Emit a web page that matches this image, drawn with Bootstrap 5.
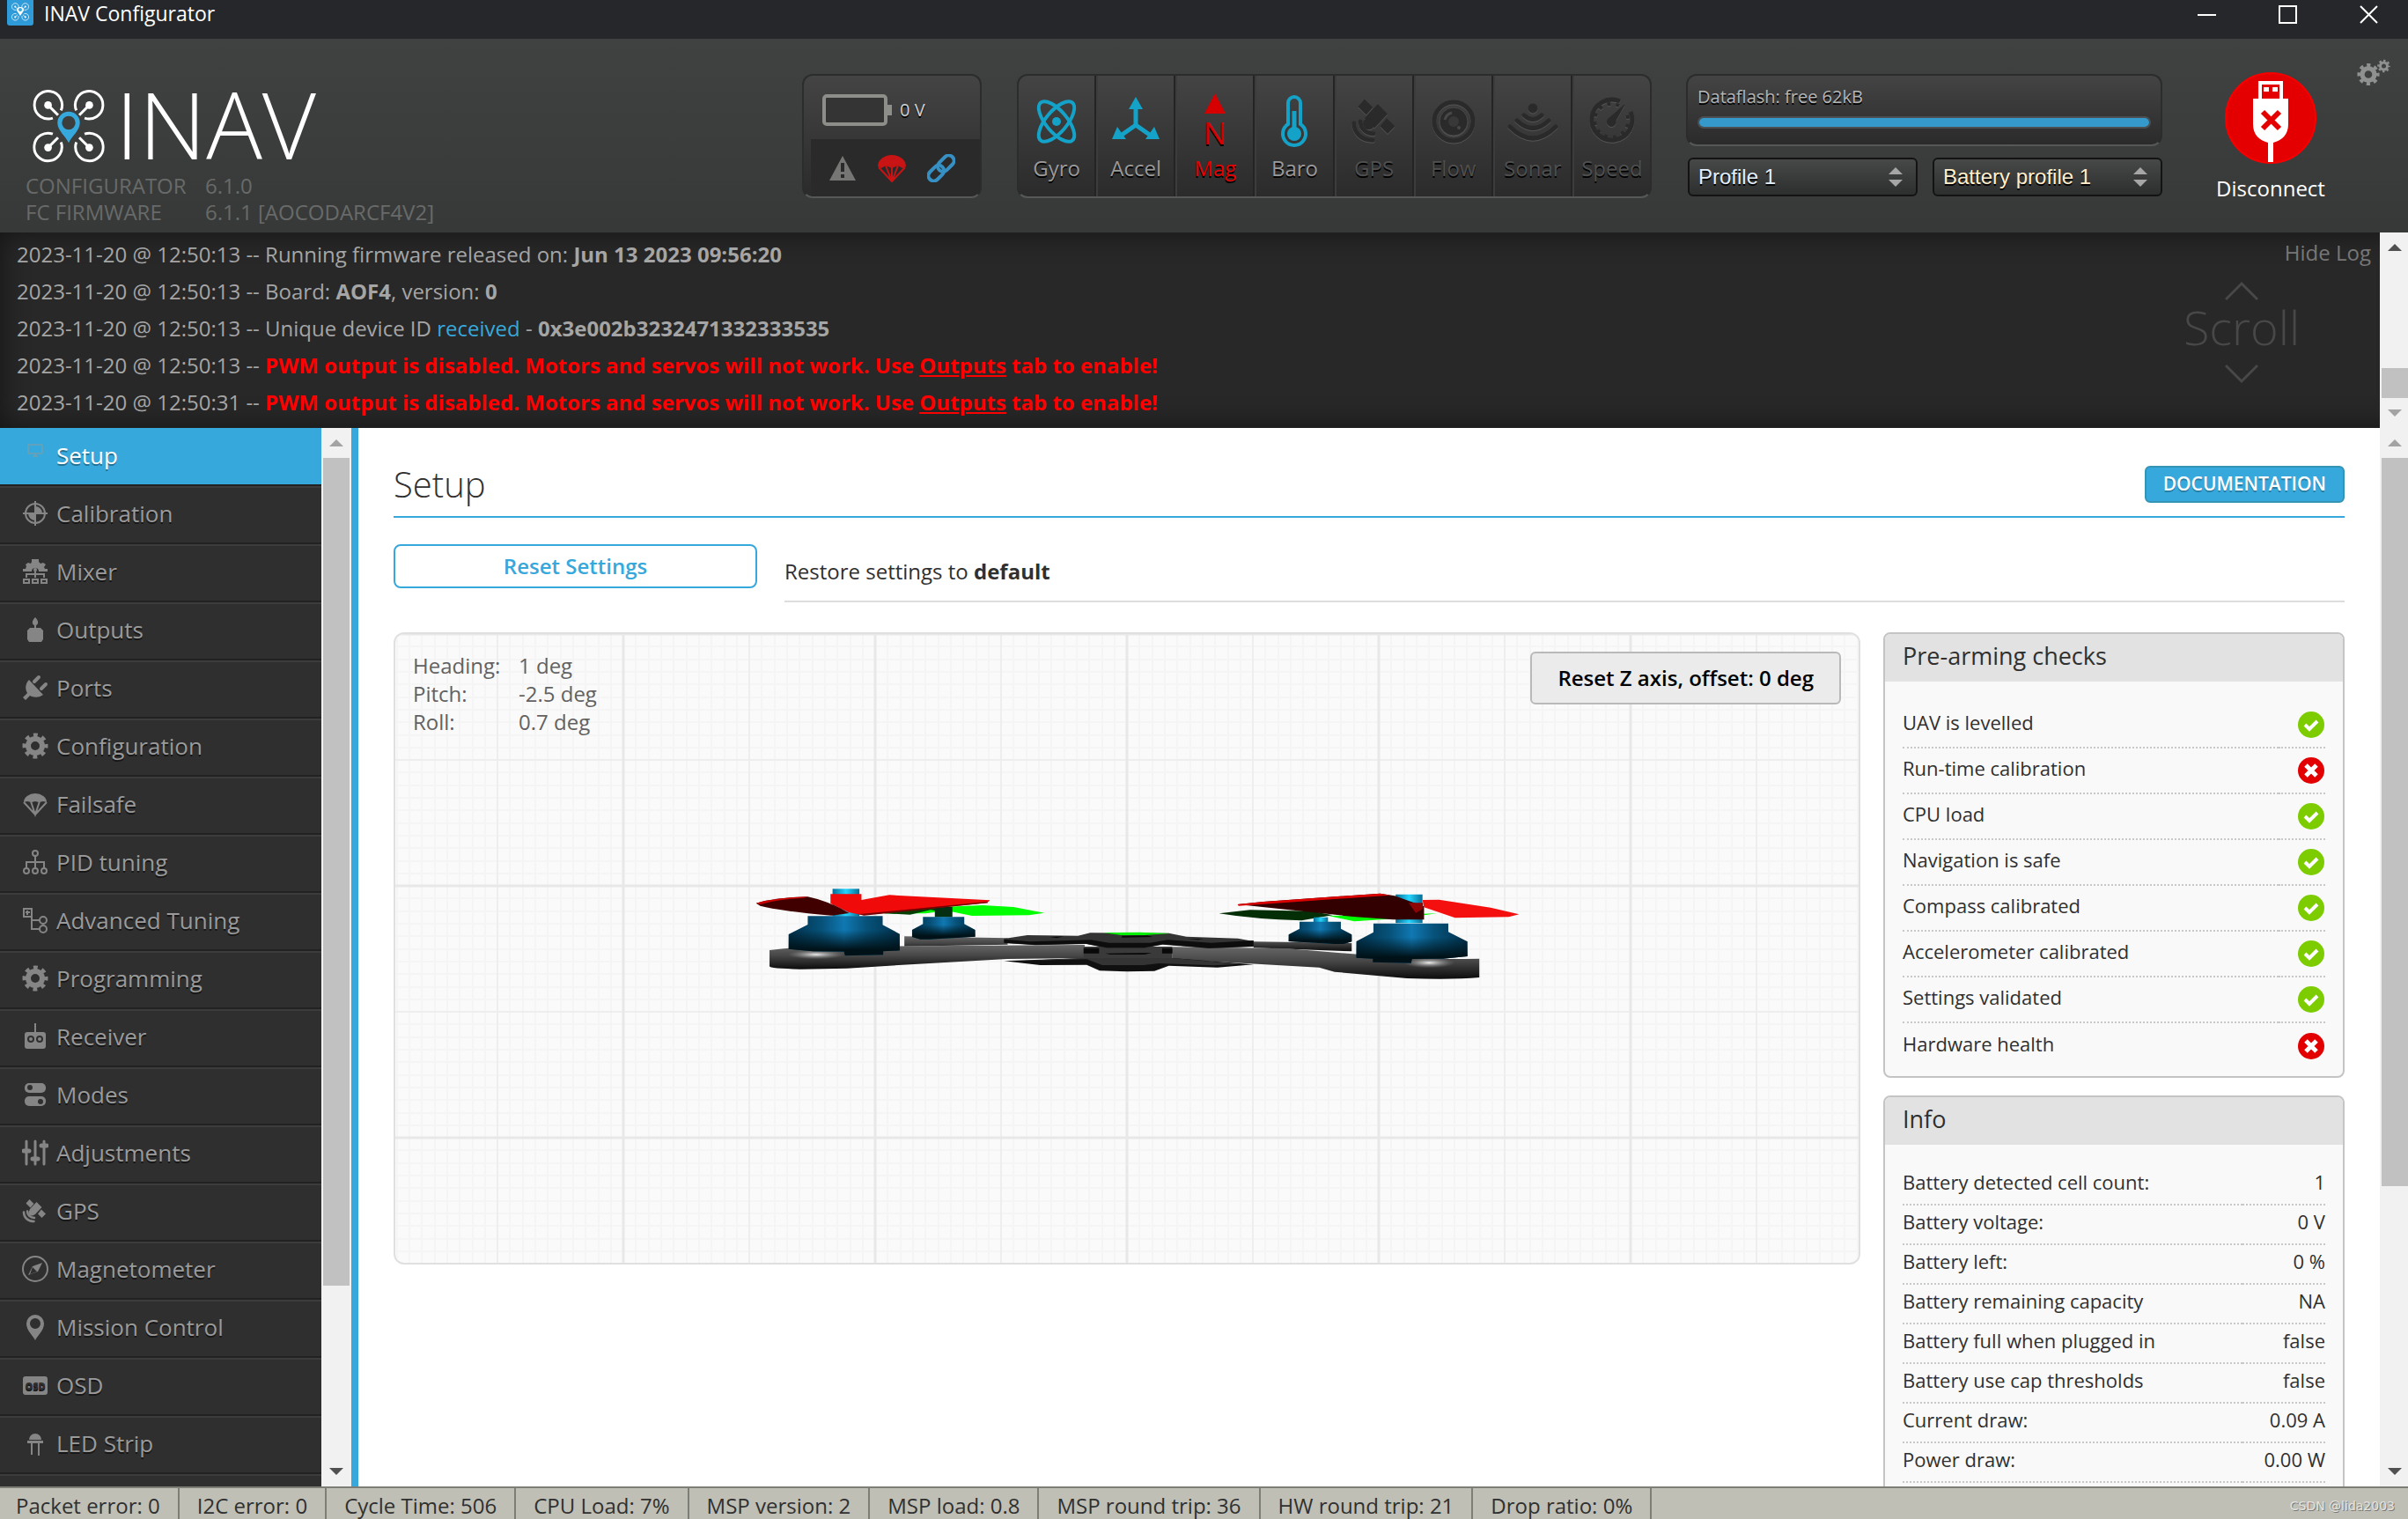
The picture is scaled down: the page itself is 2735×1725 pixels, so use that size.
<!DOCTYPE html>
<html lang="en">
<head>
<meta charset="utf-8">
<meta name="viewport" content="width=device-width, initial-scale=1">
<title>INAV Configurator</title>
<link href="https://cdn.jsdelivr.net/npm/bootstrap@5.3.0/dist/css/bootstrap.min.css" rel="stylesheet">
<style>
:root{--accent:#37a8db;--line:#c4c4c4}
body{font-family:"Open Sans","Noto Sans",sans-serif;font-size:24px;line-height:32px;color:#303030;background:#fff}
a{text-decoration:none}
.titlebar{height:44px;background:#25272b;color:#fff;font-size:23px;line-height:30px}
.app-mark{width:30px;height:30px;margin-left:8px}
.win-btn{background:none;border:0;padding:0 0 0 4px;width:92px;height:34px;color:#fff}
.win-btn svg{display:block;margin:0 auto}
.topbar{height:220px;background:linear-gradient(#404241,#373938);color:#fff}
.brand{padding:58px 0 0 29px;color:#686a69}
.brand-row{height:94px;padding-left:8px;gap:12px}
.brand-name{font-weight:300;font-size:106px;line-height:76px;color:#fff}
.versions{font-size:24px;line-height:30px;display:grid;grid-template-columns:204px auto}
.tools{padding:40px 20px 0 0}
.gauge{background:linear-gradient(#444,#2b2b2b);border:2px solid #2b2c2c;border-bottom-color:#565857;border-radius:12px;color:#999;text-shadow:0 2px 0 #000;overflow:hidden}
.power-box{width:204px;height:141px;margin-right:40px}
.power-top{height:72px;padding:6px 0 0 21px;font-size:20px;color:#d0d0d0}
.power-flags{height:65px;padding-left:20px;margin-left:8px;background:#2a2a2a}
.power-flags svg{margin-right:24px}
.sensors{width:721px;height:141px;margin-right:39px}
.sensor{flex:1 1 0;border-right:2px solid #242424;border-left:2px solid #3c3c3c;padding-top:20px;text-align:center}
.sensor:first-child{border-left:0}
.sensor:last-child{border-right:0}
.sensor svg{width:64px;height:64px;display:block;margin:0 auto 5px;overflow:visible}
.sensor.is-off{color:#4f4f4f}
.sensor.is-bad{color:#e40000}
.emboss{fill:#2a2a2a;stroke:#2a2a2a;filter:drop-shadow(0 1px 0 #555)}
.storage{width:541px;margin-right:61px}
.flash-box{height:82px;padding:8px 11px;font-size:20px;color:#b4b4b4}
.flash-bar{height:14px;margin-top:6px;border-radius:7px;background:#2b2b2b;border:2px solid #4b4f52}
.flash-bar .progress-bar{background:#3699cc}
.profiles{padding:13px 0 0 2px;gap:17px}
.picker{flex:1 1 0;height:44px;font:24px/32px "Liberation Sans",sans-serif;padding:0 10px;color:#e2efff;border:2px solid #131313;border-radius:6px;text-shadow:0 2px 0 #000;background:linear-gradient(#474948,#2d2e2e);background-image:url("data:image/svg+xml,%3Csvg xmlns='http://www.w3.org/2000/svg' width='16' height='22'%3E%3Cpath d='M8 0l8 8H0zM8 22l8-8H0z' fill='%23a6a6a6'/%3E%3C/svg%3E"),linear-gradient(#474948,#2d2e2e);background-repeat:no-repeat;background-position:right 15px center,0 0;appearance:none}
.picker-warm{color:#ffeecb}
.connect{width:124px;margin-right:36px;background:none;border:0;padding:0;color:#fff}
.connect svg{display:block;width:104px;height:104px;margin:-2px auto 12px}
.gears{width:38px;height:32px;margin-top:-17px;background:none;border:0;padding:0;color:#8f9190}
.gears svg{display:block}
.logbox{height:222px;background:#282828;box-shadow:inset 0 0 30px #141414;color:#a5a5a5}
.log-lines{padding:4px 0 0 19px;line-height:42px}
.log-lines a{color:var(--accent)}
.alert-text,.log-lines .alert-text a{color:#f00;font-weight:700}
.log-lines .alert-text a{text-decoration:underline}
.log-side{width:247px;line-height:46px}
.hide-log{color:#777;padding-right:10px}
.scroll-hint{width:180px;color:#484848;font-size:54px;font-weight:300;line-height:58px}
.scroll-hint svg{display:block;margin:0 auto}
.rail{width:32px;background:#f1f1f1;padding-left:2px}
.rail-left{width:34px;padding-right:2px}
.rail-end{flex:0 0 34px;display:flex;align-items:center;justify-content:center}
.rail-grip{background:#c1c1c1}
.sidebar{width:365px;background:#2f2f2f}
.sidebar .nav-link{height:66px;flex:none;display:flex;align-items:center;gap:9px;padding:0 0 4px 25px;border-top:2px solid #3c3c3c;border-bottom:2px solid #222;font-size:26px;line-height:34px;color:#9a9a9a;text-shadow:0 2px 0 #161616}
.sidebar .nav-link.active{background:var(--accent);border-top-color:var(--accent);color:#fff;text-shadow:0 2px 0 rgba(0,0,0,.35)}
.sidebar svg{width:30px;height:30px;flex:none;color:#858585}
.edge{width:8px;background:var(--accent)}
.page{padding:43px 40px 0;min-width:0}
.page-head{padding-bottom:15px;border-bottom:2px solid var(--accent)}
.page-title{font-size:40px;line-height:42px;font-weight:300}
.btn-doc{height:42px;padding:0 19px;background:var(--accent);border:2px solid #3394b5;border-radius:6px;color:#fff;font-size:21px;line-height:36px;font-weight:600;text-shadow:0 2px 0 rgba(0,0,0,.25)}
.reset-row{margin-top:30px;gap:31px}
.btn-reset{width:413px;height:50px;padding:0;border:2px solid var(--accent);border-radius:8px;color:var(--accent);font-size:24px;line-height:32px;font-weight:600}
.reset-note{padding:15px 0 17px;border-bottom:2px solid #ddd}
.work{margin-top:34px;gap:26px}
.stage{position:relative;align-self:flex-start;min-width:0;border:2px solid #e0e0e0;border-radius:12px;background:#fafafa;overflow:hidden}
.stage-svg{display:block;width:100%}
.attitude{position:absolute;left:20px;top:20px;display:grid;grid-template-columns:120px auto;color:#626262;margin:0}
.attitude dt{font-weight:400}
.attitude dd{margin:0}
.btn-axis{position:absolute;right:20px;top:20px;height:60px;padding:0 29px;background:#ebebeb;border:2px solid #b9b9b9;border-radius:6px;color:#000;font-size:24px;font-weight:600}
.panels{width:524px;flex:none}
.panel-box{border:2px solid var(--line);border-radius:8px;background:#f9f9f9;overflow:hidden;margin-bottom:20px;padding-bottom:9px}
.panel-title{background:#e2e2e2;font-size:27px;line-height:34px;font-weight:400;padding:8px 20px 12px;margin:0 0 23px}
.panel-table{width:calc(100% - 40px);margin:0 20px;font-size:22px;line-height:30px}
.panel-table th{font-weight:400}
.panel-table td{text-align:right}
.panel-table tr{border-bottom:2px dotted #c8c8c8}
.panel-table tr:last-child{border-bottom:0}
.checks tr{height:52px}
.checks th{padding:7px 0 13px}
.checks svg{display:block;margin-left:auto}
.info-rows tr{height:45px}
.info-rows th,.info-rows td{padding:3px 0 10px}
.statusbar{height:37px;background:#bfbfb5;border-top:2px solid #7d7e76}
.status-cell{padding:5px 20px 0 20px;border-right:2px solid #7d7e76;white-space:nowrap;height:35px;line-height:30px}
.status-cell:first-child{padding-left:18px}
.credit{font:14px/20px "DejaVu Sans",sans-serif;color:#e4e4e0;text-shadow:1px 1px 0 #777;padding:10px 15px 0 0}
</style>
</head>
<body class="vh-100 overflow-hidden d-flex flex-column">
<svg width="0" height="0" class="position-absolute" aria-hidden="true">
  <defs>
    <symbol id="gear" viewBox="0 0 30 30"><g fill="none" stroke="currentColor"><circle cx="15" cy="15" r="8" stroke-width="6"/><circle cx="15" cy="15" r="12" stroke-width="5" stroke-dasharray="4.7 4.72" stroke-dashoffset="2.35"/></g></symbol>
    <symbol id="quad" viewBox="0 0 244 248"><g fill="none" stroke="currentColor" stroke-width="9"><path d="M96 70A47 47 0 1 0 68 96M148 70A47 47 0 1 1 176 96M96 178A47 47 0 1 1 68 150M148 178A47 47 0 1 0 176 150"/><path d="M52 52l34 34M192 52l-34 34M52 196l34-34M192 196l-34-34"/></g><g fill="currentColor"><circle cx="52" cy="52" r="13"/><circle cx="192" cy="52" r="13"/><circle cx="52" cy="196" r="13"/><circle cx="192" cy="196" r="13"/></g></symbol>
    <symbol id="sat" viewBox="0 0 60 60"><path d="M17 4l10 10-8 9-10-10zM33 10l12 12-16 17-12-12zM44 27l10 10-9 9-9-9z" stroke="none"/><path d="M4 33c0 12 9 21 23 21M12 31c0 9 7 15 16 15" fill="none" stroke-width="5" stroke-linecap="round"/><circle cx="22" cy="34" r="7" stroke="none"/></symbol>
    <symbol id="ok" viewBox="0 0 30 30"><circle cx="15" cy="15" r="15" fill="#7ccc00"/><path d="M8 15l5 5 9-9" fill="none" stroke="#fff" stroke-width="4"/></symbol>
    <symbol id="bad" viewBox="0 0 30 30"><circle cx="15" cy="15" r="15" fill="#e20000"/><path d="M9 9l12 12M21 9L9 21" fill="none" stroke="#fff" stroke-width="5"/></symbol>
  </defs>
</svg>

<header class="titlebar d-flex flex-shrink-0">
  <svg class="app-mark" viewBox="0 0 30 30"><path d="M0 0h30v26a3 3 0 0 1-3 3H3a3 3 0 0 1-3-3z" fill="#2f9bd8"/><svg x="5" y="3" width="20" height="21" color="#fff"><use href="#quad"/></svg><path d="M15 18l-4-6a4 4 0 1 1 8 0z" fill="#fff"/><circle cx="15" cy="11" r="2" fill="#37a8db"/></svg>
  <span class="ms-2 ps-1">INAV Configurator</span>
  <div class="ms-auto d-flex align-items-start">
    <button class="win-btn" aria-label="Minimize"><svg width="22" height="22"><path d="M0 11h21" stroke="#fff" stroke-width="2"/></svg></button>
    <button class="win-btn" aria-label="Maximize"><svg width="22" height="22"><path d="M1 1h19v19H1z" fill="none" stroke="#fff" stroke-width="2"/></svg></button>
    <button class="win-btn" aria-label="Close"><svg width="22" height="22"><path d="M1 1l19 19M20 1L1 20" stroke="#fff" stroke-width="2"/></svg></button>
  </div>
</header>

<section class="topbar d-flex flex-shrink-0">
  <div class="brand">
    <div class="brand-row d-flex align-items-start">
      <svg width="82" height="83" viewBox="0 0 244 248" color="#fff"><use href="#quad"/><path fill="#37a8db" fill-rule="evenodd" d="M122 180C112 158 84 138 84 112a38 38 0 0 1 76 0c0 26-28 46-38 68zM122 89a23 23 0 1 0 0 46 23 23 0 0 0 0-46z"/></svg>
      <span class="brand-name">INAV</span>
    </div>
    <div class="versions"><span>CONFIGURATOR</span><span>6.1.0</span><span>FC FIRMWARE</span><span>6.1.1 [AOCODARCF4V2]</span></div>
  </div>
  <div class="tools d-flex align-items-start ms-auto">
    <div class="gauge power-box">
      <div class="power-top d-flex align-items-center">
        <svg width="88" height="36" class="flex-shrink-0"><rect x="2" y="2" width="70" height="32" rx="3" fill="#343434" stroke="#8d8d8a" stroke-width="4"/><path d="M74 12h5v12h-5z" fill="#8d8d8a"/></svg>
        <span>0 V</span>
      </div>
      <div class="power-flags d-flex align-items-center">
        <svg width="32" height="30" viewBox="0 0 32 30"><path d="M16 1l15 28H1z" fill="#767674"/><path d="M16 9v10M16 22v4" stroke="#2a2a2a" stroke-width="4"/></svg>
        <svg width="32" height="32" viewBox="0 0 32 32"><path d="M0 14a16 13 0 0 1 32 0l-4 2-5-3-7 3-7-3-5 3z" fill="#c81414"/><path d="M1 15l15 16 15-16M9 13l7 18 7-18M16 15v15" fill="none" stroke="#c81414" stroke-width="2"/></svg>
        <svg width="32" height="32" viewBox="0 0 32 32" class="me-0"><g fill="none" stroke="#3690c4" stroke-width="4" transform="rotate(-45 16 16)"><rect x="-2" y="10" width="20" height="12" rx="6"/><rect x="13" y="10" width="21" height="12" rx="6"/></g></svg>
      </div>
    </div>
    <div class="gauge sensors d-flex">
      <div class="sensor"><svg viewBox="0 0 64 64"><g fill="none" stroke="#14a2c9" stroke-width="4"><ellipse cx="32" cy="32" rx="12" ry="28" transform="rotate(40 32 32)"/><ellipse cx="32" cy="32" rx="12" ry="28" transform="rotate(-40 32 32)"/></g><circle cx="32" cy="32" r="5" fill="#14a2c9"/></svg>Gyro</div>
      <div class="sensor"><svg viewBox="0 0 64 64"><path d="M32 10v28M32 36L12 50M32 36l20 14" stroke="#14a2c9" stroke-width="5"/><path d="M32 4l8 14H24zM5 52l6-14 10 14zM59 52l-6-14-10 14z" fill="#14a2c9"/></svg>Accel</div>
      <div class="sensor is-bad"><svg viewBox="0 0 64 64"><path d="M32 0l12 23H20z" fill="#d60000"/><text x="32" y="58" text-anchor="middle" font-family="Open Sans" font-size="35" fill="#d60000">N</text></svg>Mag</div>
      <div class="sensor"><svg viewBox="0 0 64 64"><path d="M25 35V11a7 7 0 0 1 14 0v24a13 13 0 1 1-14 0z" fill="none" stroke="#14a2c9" stroke-width="4"/><path d="M32 20v26" stroke="#14a2c9" stroke-width="5"/><circle cx="32" cy="46" r="8" fill="#14a2c9"/></svg>Baro</div>
      <div class="sensor is-off"><svg viewBox="0 0 64 64" class="emboss"><use href="#sat" x="5" y="3" width="56" height="56"/></svg>GPS</div>
      <div class="sensor is-off"><svg viewBox="0 0 64 64" class="emboss"><circle cx="32" cy="32" r="22" fill="none" stroke-width="5"/><circle cx="32" cy="32" r="16" stroke="#484848" stroke-width="1"/><circle cx="32" cy="32" r="6" fill="#383838" stroke="none"/><path d="M22 30a11 11 0 0 1 8-8" fill="none" stroke="#484848" stroke-width="3"/><circle cx="38" cy="39" r="2" fill="#484848" stroke="none"/></svg>Flow</div>
      <div class="sensor is-off"><svg viewBox="0 0 64 64" class="emboss"><circle cx="32" cy="17" r="5"/><path d="M22 25q10 9 20 0M14 31q18 17 36 0M6 38q26 26 52 0" fill="none" stroke-width="5" stroke-linecap="round"/></svg>Sonar</div>
      <div class="sensor is-off"><svg viewBox="0 0 64 64" class="emboss"><path d="M41 9A23 23 0 1 0 53 21" fill="none" stroke-width="5"/><path d="M40 14A19 19 0 1 0 49 24" fill="none" stroke-width="4" stroke-dasharray="4 6"/><path d="M46 13L36 31a5 5 0 1 1-7-3z"/></svg>Speed</div>
    </div>
    <div class="storage">
      <div class="gauge flash-box">Dataflash: free 62kB
        <div class="progress flash-bar" role="progressbar" aria-label="Dataflash usage"><div class="progress-bar" style="width:100%"></div></div>
      </div>
      <div class="profiles d-flex">
        <select class="picker" aria-label="Profile"><option>Profile 1</option></select>
        <select class="picker picker-warm" aria-label="Battery profile"><option>Battery profile 1</option></select>
      </div>
    </div>
    <button class="connect"><svg viewBox="0 0 104 104"><circle cx="52" cy="52" r="51" fill="#e40000" stroke="#f60000" stroke-width="2"/><path d="M40 31V12h24v19" fill="none" stroke="#fff" stroke-width="4"/><path d="M44 17h6v5h-6zM54 17h6v5h-6zM32 30h40v29c0 12-7 18-17 21v22h-6V80c-10-3-17-9-17-21z" fill="#fff"/><path d="M43 45l19 19M62 45L43 64" stroke="#e40000" stroke-width="6"/></svg>Disconnect</button>
    <button class="gears" aria-label="Options"><svg width="38" height="32" viewBox="0 0 38 32"><use href="#gear" x="0" y="4" width="26" height="27"/><use href="#gear" x="23" y="0" width="15" height="16"/></svg></button>
  </div>
</section>

<section class="logbox d-flex flex-shrink-0">
  <div class="log-lines flex-fill">
    <div>2023-11-20 @ 12:50:13 -- Running firmware released on: <b>Jun 13 2023 09:56:20</b></div>
    <div>2023-11-20 @ 12:50:13 -- Board: <b>AOF4</b>, version: <b>0</b></div>
    <div>2023-11-20 @ 12:50:13 -- Unique device ID <a href="#">received</a> - <b>0x3e002b3232471332333535</b></div>
    <div>2023-11-20 @ 12:50:13 -- <span class="alert-text">PWM output is disabled. Motors and servos will not work. Use <a href="#">Outputs</a> tab to enable!</span></div>
    <div>2023-11-20 @ 12:50:31 -- <span class="alert-text">PWM output is disabled. Motors and servos will not work. Use <a href="#">Outputs</a> tab to enable!</span></div>
  </div>
  <div class="log-side">
    <a href="#" class="hide-log d-block text-end">Hide Log</a>
    <div class="scroll-hint text-center pt-2">
      <svg width="38" height="24"><path d="M1 22L19 4l18 18" fill="none" stroke="currentColor" stroke-width="3"/></svg>
      Scroll
      <svg width="38" height="38"><path d="M1 15l18 18 18-18" fill="none" stroke="currentColor" stroke-width="3"/></svg>
    </div>
  </div>
  <div class="rail d-flex flex-column" aria-hidden="true">
    <div class="rail-end"><svg width="16" height="8"><path d="M0 8l8-8 8 8z" fill="#505050"/></svg></div>
    <div style="flex-grow:120"></div>
    <div class="rail-grip" style="flex-grow:34"></div>
    <div class="rail-end"><svg width="16" height="8"><path d="M0 0l8 8 8-8z" fill="#a3a3a3"/></svg></div>
  </div>
</section>

<main class="d-flex flex-fill overflow-hidden">
  <nav class="sidebar nav flex-column flex-nowrap flex-shrink-0 overflow-hidden">
    <a class="nav-link active" href="#"><svg viewBox="0 0 30 30" fill="none" stroke="#8a9a9e" stroke-width="1"><path d="M7 3h16v10H7zM12 16h6M15 13v3"/></svg>Setup</a>
    <a class="nav-link" href="#"><svg viewBox="0 0 30 30"><g fill="none" stroke="currentColor" stroke-width="2"><circle cx="15" cy="15" r="11"/><path d="M15 1v28M1 15h28"/></g><path d="M15 15V7a8 8 0 0 1 8 8zM15 15v8a8 8 0 0 1-8-8z" fill="currentColor"/></svg>Calibration</a>
    <a class="nav-link" href="#"><svg viewBox="0 0 30 30"><path d="M1 15v-3h3l1-3-1-2 3-2 3 1 1-2V1h8v3l2 2 3-1 3 2-2 3 1 2h3v3H19a4 4 0 0 0-8 0z" fill="currentColor"/><circle cx="15" cy="13" r="2" fill="currentColor"/><path d="M5 22v-4h20v4M15 13v9M2 24h6v4H2zM12 24h6v4h-6zM22 24h6v4h-6z" fill="none" stroke="currentColor" stroke-width="2"/></svg>Mixer</a>
    <a class="nav-link" href="#"><svg viewBox="0 0 30 30"><path d="M15 1c4 4 4 8 1 9v3h5l3 3v10l-2 3H8l-2-3V16l3-3h5v-3c-3-1-3-5 1-9z" fill="currentColor"/></svg>Outputs</a>
    <a class="nav-link" href="#"><svg viewBox="0 0 30 30"><path d="M8 6l16 17c-6 4-11 3-15 1l-5 5-3-3 5-5C3 16 4 10 8 6z" fill="currentColor"/><path d="M14 8l5-5M22 16l5-5" stroke="currentColor" stroke-width="4" stroke-linecap="round"/></svg>Ports</a>
    <a class="nav-link" href="#"><svg><use href="#gear"/></svg>Configuration</a>
    <a class="nav-link" href="#"><svg viewBox="0 0 30 30"><path d="M2 13a13 10 0 0 1 26 0l-4-1-5 1-4-1-4 1-5-1z" fill="currentColor"/><path d="M2 13l13 14 13-14M10 12l5 15 5-15" fill="none" stroke="currentColor" stroke-width="2"/></svg>Failsafe</a>
    <a class="nav-link" href="#"><svg viewBox="0 0 30 30" fill="none" stroke="currentColor" stroke-width="2"><circle cx="15" cy="5" r="3"/><circle cx="5" cy="25" r="3"/><circle cx="15" cy="25" r="3"/><circle cx="25" cy="25" r="3"/><path d="M15 8v14M5 22v-7h20v7"/></svg>PID tuning</a>
    <a class="nav-link" href="#"><svg viewBox="0 0 30 30" fill="none" stroke="currentColor" stroke-width="2"><path d="M2 2h9v9H2zM6 4v5M4 6h5M11 11v14h9M11 15h9"/><circle cx="24" cy="15" r="4"/><circle cx="24" cy="25" r="4"/></svg>Advanced Tuning</a>
    <a class="nav-link" href="#"><svg><use href="#gear"/></svg>Programming</a>
    <a class="nav-link" href="#"><svg viewBox="0 0 30 30"><path d="M15 0v11" stroke="currentColor" stroke-width="2"/><path fill-rule="evenodd" d="M6 10h18a3 3 0 0 1 3 3v13a3 3 0 0 1-3 3H6a3 3 0 0 1-3-3V13a3 3 0 0 1 3-3zM10 14a4 4 0 1 0 0 8 4 4 0 0 0 0-8zM20 14a4 4 0 1 0 0 8 4 4 0 0 0 0-8z" fill="currentColor"/><circle cx="10" cy="18" r="2" fill="currentColor"/><circle cx="20" cy="18" r="2" fill="currentColor"/></svg>Receiver</a>
    <a class="nav-link" href="#"><svg viewBox="0 0 30 30"><rect x="3" y="2" width="24" height="11" rx="5" fill="currentColor"/><rect x="3" y="17" width="24" height="11" rx="5" fill="currentColor"/><circle cx="9" cy="7" r="3" fill="#2f2f2f"/><circle cx="21" cy="23" r="3" fill="#2f2f2f"/></svg>Modes</a>
    <a class="nav-link" href="#"><svg viewBox="0 0 30 30"><path d="M5 2v26M15 2v26M25 2v26M2 13h6M12 22h6M22 7h6" stroke="currentColor" stroke-width="3" stroke-linecap="round"/><path d="M2 13h6M12 22h6M22 7h6" stroke="currentColor" stroke-width="5" stroke-linecap="round"/></svg>Adjustments</a>
    <a class="nav-link" href="#"><svg viewBox="0 0 30 30" fill="currentColor" stroke="currentColor"><use href="#sat" x="0" y="0" width="30" height="30"/></svg>GPS</a>
    <a class="nav-link" href="#"><svg viewBox="0 0 30 30"><circle cx="15" cy="15" r="14" fill="none" stroke="currentColor" stroke-width="2"/><path d="M23 8L12 12 7 22l11-4zM12 13l5 5-8 3z" fill="currentColor" fill-rule="evenodd"/></svg>Magnetometer</a>
    <a class="nav-link" href="#"><svg viewBox="0 0 30 30"><path fill="currentColor" fill-rule="evenodd" d="M15 30C12 24 5 19 5 11a10 10 0 0 1 20 0c0 8-7 13-10 19zM15 5a6 6 0 1 0 0 12 6 6 0 0 0 0-12z"/></svg>Mission Control</a>
    <a class="nav-link" href="#"><svg viewBox="0 0 30 30"><rect x="1" y="5" width="28" height="21" rx="3" fill="currentColor"/><text x="15" y="20" text-anchor="middle" font-family="Open Sans" font-weight="800" font-size="11" fill="#2f2f2f">OSD</text></svg>OSD</a>
    <a class="nav-link" href="#"><svg viewBox="0 0 30 30"><path d="M8 11a7 7 0 0 1 14 0zM6 12h18v3H6z" fill="currentColor"/><path d="M11 15v13M19 15v14" stroke="currentColor" stroke-width="2"/></svg>LED Strip</a>
    <a class="nav-link" href="#" aria-label="More"></a>
  </nav>
  <div class="rail rail-left d-flex flex-column flex-shrink-0" aria-hidden="true">
    <div class="rail-end"><svg width="16" height="8"><path d="M0 8l8-8 8 8z" fill="#a3a3a3"/></svg></div>
    <div class="rail-grip" style="flex-grow:940"></div>
    <div style="flex-grow:194"></div>
    <div class="rail-end"><svg width="16" height="8"><path d="M0 0l8 8 8-8z" fill="#505050"/></svg></div>
  </div>
  <div class="edge flex-shrink-0"></div>

  <div class="page flex-fill">
    <div class="page-head d-flex justify-content-between">
      <h1 class="page-title mb-0">Setup</h1>
      <a class="btn btn-doc" href="#">DOCUMENTATION</a>
    </div>
    <div class="reset-row d-flex align-items-start">
      <button class="btn btn-reset flex-shrink-0">Reset Settings</button>
      <div class="reset-note flex-fill">Restore settings to <b>default</b></div>
    </div>
    <div class="work d-flex">
      <div class="stage flex-fill">
        <svg class="stage-svg" viewBox="0 0 1662 714" role="img" aria-label="Aircraft attitude model">
          <defs>
            <pattern id="fine" x="116" width="143" height="143" patternUnits="userSpaceOnUse"><path d="M14 0v143M29 0v143M43 0v143M57 0v143M72 0v143M86 0v143M100 0v143M115 0v143M129 0v143M0 14h143M0 29h143M0 43h143M0 57h143M0 72h143M0 86h143M0 100h143M0 115h143M0 129h143" stroke="#f5f5f5" stroke-width="2" fill="none"/></pattern>
            <pattern id="coarse" x="259" width="286" height="286" patternUnits="userSpaceOnUse"><path d="M143 0v286M0 143h286" stroke="#eee" stroke-width="2"/><path d="M0 0v286M286 0v286M0 0h286M0 286h286" stroke="#e8e8e8" stroke-width="3"/></pattern>
            <linearGradient id="motor"><stop offset="0" stop-color="#00304a"/><stop offset=".3" stop-color="#07527a"/><stop offset=".5" stop-color="#1078b2"/><stop offset=".7" stop-color="#07527a"/><stop offset="1" stop-color="#00304a"/></linearGradient>
            <linearGradient id="foot" x2="0" y2="1"><stop offset=".35" stop-color="#001218" stop-opacity="0"/><stop offset=".85" stop-color="#001218"/></linearGradient>
            <linearGradient id="shaft"><stop offset="0" stop-color="#066d94"/><stop offset=".5" stop-color="#25d4ff"/><stop offset="1" stop-color="#066d94"/></linearGradient>
            <linearGradient id="arm" x2="0" y2="1"><stop offset="0" stop-color="#676767"/><stop offset=".45" stop-color="#464646"/><stop offset="1" stop-color="#0c0c0c"/></linearGradient>
            <radialGradient id="glint"><stop offset="0" stop-color="#eee"/><stop offset="1" stop-color="#888" stop-opacity="0"/></radialGradient>
          </defs>
          <rect width="1662" height="714" fill="url(#fine)"/>
          <rect width="1662" height="714" fill="url(#coarse)"/>
          <svg x="391" y="260" width="920" height="150" viewBox="0 0 1568 450" preserveAspectRatio="none">
            <path d="M319 250l200 6v22l-200 6zM995 268l190 5v28l-190-12z" fill="url(#arm)"/>
            <path d="M280 172q50-20 110-22l80-6 60 6 60 20-30 8-110 2-50-18-40 10z" fill="#0f0"/>
            <path d="M280 172q50-20 110-22l20 24-40-14-40 16z" fill="#053f05"/>
            <path d="M378 150h34v35h-34z" fill="#042f12"/>
            <path d="M928 172l60-12 120 4 40 14-60 18q-90-4-160-24z" fill="#032e06"/>
            <path d="M1140 180l120-4 90-4-70 16-90 11z" fill="#0f0"/>
            <path d="M1111 185h28v16h-28z" fill="url(#shaft)"/>
            <g id="backMotor"><path d="M355 184h80v24l21 20v23l-88 9h-18l-16-8v-24l21-20z" fill="url(#motor)"/><path d="M355 184h80v24l21 20v23l-88 9h-18l-16-8v-24l21-20z" fill="url(#foot)"/></g>
            <use href="#backMotor" transform="matrix(-1 0 0 1 1519 16)"/>
            <path d="M58 297q60-14 140-12l470-6v45l-150 3-180 18-130 14-90 3q-60-2-60-10z" fill="url(#arm)"/>
            <path d="M1432 326v64q-50 8-140 3l-140-22-30-15-284-28v-42l220 5 150 22q100 18 224 13z" fill="url(#arm)"/>
            <ellipse cx="148" cy="312" rx="55" ry="16" fill="url(#glint)"/><ellipse cx="1335" cy="340" rx="50" ry="18" fill="url(#glint)"/>
            <path d="M666 285h172v50l-172-8z" fill="#3a3a3a"/><path d="M666 290h30v18h-30zM818 290h20v18h-20zM708 308l90-2-14 6h-66z" fill="#090909"/>
            <path d="M512 334l154-10h172l157 22-70 10-94-6-28 18-52 2-54-3-25-20-90 1z" fill="#101010"/>
            <path d="M540 334l126-10h172l130 20-50 5-106-7-30 6h-80l-30-20z" fill="#343434"/>
            <path d="M512 258l45-12 98 2 24-10 152 1 34 12 100 6 30 10v18l-86 6-90-13-36 12h-72l-40-14-98 4-61-7z" fill="#343434"/>
            <path d="M512 260l50 8 118-6 35 10h80l34-10 84 10 82-8v20l-86 6-90-13-36 12h-72l-40-14-98 4-61-7z" fill="#0d0d0d"/>
            <path d="M704 238l70-2 60 4-50 6h-46z" fill="#0e0"/><path d="M740 248l50-1 10 5-60 2zM868 258l30 1-10 3zM600 252l28-2-14 6z" fill="#090909"/>
            <path d="M180 88h52v94h-52z" fill="url(#shaft)"/>
            <path d="M32 137q40-20 100-22 40 14 80 56l-34 8Q80 164 40 146z" fill="#410000"/>
            <path d="M32 137q40-20 100-22l-8 4q-50 4-84 22z" fill="#c00"/>
            <path d="M176 106h60v20l54-17 195 18-6 9-240 42-28-10-35-30z" fill="#f00a0a"/>
            <path d="M479 132l-240 41-10 1 12 5 240-43z" fill="#760000"/>
            <g id="frontMotor"><path d="M132 181h145v30l33 31v56l-32 3v12l-74 3-2-14-60-1-47-8v-50l37-33z" fill="url(#motor)"/><path d="M132 181h145v30l33 31v56l-32 3v12l-74 3-2-14-60-1-47-8v-50l37-33z" fill="url(#foot)"/></g>
            <path d="M1270 107h52v98h-52z" fill="url(#shaft)"/>
            <path d="M1322 126l32-1 100 27 55 23-20 9-104 3-60-36z" fill="#f51010"/>
            <path d="M964 141l50-9 226-28 28 8 57 36v45h-60l-72-9z" fill="#330000"/>
            <path d="M964 141l50-9 226-28 20 6-246 30-48 6z" fill="#d00"/>
            <path d="M1295 136h28v20l-14 14z" fill="#8e0505"/>
            <use href="#frontMotor" transform="matrix(-1 0 0 1 1504 25)"/>
          </svg>
        </svg>
        <dl class="attitude"><dt>Heading:</dt><dd>1 deg</dd><dt>Pitch:</dt><dd>-2.5 deg</dd><dt>Roll:</dt><dd>0.7 deg</dd></dl>
        <button class="btn btn-axis">Reset Z axis, offset: 0 deg</button>
      </div>
      <aside class="panels">
        <section class="panel-box">
          <h2 class="panel-title">Pre-arming checks</h2>
          <table class="panel-table checks">
            <tr><th>UAV is levelled</th><td><svg width="30" height="30"><use href="#ok"/></svg></td></tr>
            <tr><th>Run-time calibration</th><td><svg width="30" height="30"><use href="#bad"/></svg></td></tr>
            <tr><th>CPU load</th><td><svg width="30" height="30"><use href="#ok"/></svg></td></tr>
            <tr><th>Navigation is safe</th><td><svg width="30" height="30"><use href="#ok"/></svg></td></tr>
            <tr><th>Compass calibrated</th><td><svg width="30" height="30"><use href="#ok"/></svg></td></tr>
            <tr><th>Accelerometer calibrated</th><td><svg width="30" height="30"><use href="#ok"/></svg></td></tr>
            <tr><th>Settings validated</th><td><svg width="30" height="30"><use href="#ok"/></svg></td></tr>
            <tr><th>Hardware health</th><td><svg width="30" height="30"><use href="#bad"/></svg></td></tr>
          </table>
        </section>
        <section class="panel-box">
          <h2 class="panel-title">Info</h2>
          <table class="panel-table info-rows">
            <tr><th>Battery detected cell count:</th><td>1</td></tr>
            <tr><th>Battery voltage:</th><td>0 V</td></tr>
            <tr><th>Battery left:</th><td>0 %</td></tr>
            <tr><th>Battery remaining capacity</th><td>NA</td></tr>
            <tr><th>Battery full when plugged in</th><td>false</td></tr>
            <tr><th>Battery use cap thresholds</th><td>false</td></tr>
            <tr><th>Current draw:</th><td>0.09 A</td></tr>
            <tr><th>Power draw:</th><td>0.00 W</td></tr>
            <tr><th></th><td></td></tr>
          </table>
        </section>
      </aside>
    </div>
  </div>
  <div class="rail d-flex flex-column flex-shrink-0" aria-hidden="true">
    <div class="rail-end"><svg width="16" height="8"><path d="M0 8l8-8 8 8z" fill="#a3a3a3"/></svg></div>
    <div class="rail-grip" style="flex-grow:827"></div>
    <div style="flex-grow:307"></div>
    <div class="rail-end"><svg width="16" height="8"><path d="M0 0l8 8 8-8z" fill="#505050"/></svg></div>
  </div>
</main>

<footer class="statusbar d-flex flex-shrink-0 overflow-hidden">
  <div class="status-cell">Packet error: 0</div>
  <div class="status-cell">I2C error: 0</div>
  <div class="status-cell">Cycle Time: 506</div>
  <div class="status-cell">CPU Load: 7%</div>
  <div class="status-cell">MSP version: 2</div>
  <div class="status-cell">MSP load: 0.8</div>
  <div class="status-cell">MSP round trip: 36</div>
  <div class="status-cell">HW round trip: 21</div>
  <div class="status-cell">Drop ratio: 0%</div>
  <span class="credit ms-auto">CSDN @lida2003</span>
</footer>
<script src="https://cdn.jsdelivr.net/npm/bootstrap@5.3.0/dist/js/bootstrap.bundle.min.js"></script>
</body>
</html>
